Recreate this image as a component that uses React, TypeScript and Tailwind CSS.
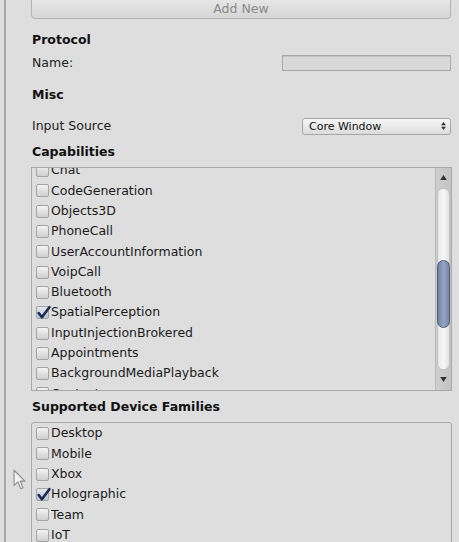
import React from 'react';

const capabilities: { label: string; checked?: boolean }[] = [
  { label: 'Chat' },
  { label: 'CodeGeneration' },
  { label: 'Objects3D' },
  { label: 'PhoneCall' },
  { label: 'UserAccountInformation' },
  { label: 'VoipCall' },
  { label: 'Bluetooth' },
  { label: 'SpatialPerception', checked: true },
  { label: 'InputInjectionBrokered' },
  { label: 'Appointments' },
  { label: 'BackgroundMediaPlayback' },
  { label: 'Contacts' },
];

const families: { label: string; checked?: boolean }[] = [
  { label: 'Desktop' },
  { label: 'Mobile' },
  { label: 'Xbox' },
  { label: 'Holographic', checked: true },
  { label: 'Team' },
  { label: 'IoT' },
];

function CheckBox({ checked }: { checked?: boolean }) {
  return (
    <div
      className={
        'relative w-[13px] h-[13px] shrink-0 rounded-[2px] border border-[#a3a3a3] ' +
        (checked
          ? 'bg-gradient-to-b from-[#e4e8f0] to-[#b9c2d3]'
          : 'bg-gradient-to-b from-[#f4f4f4] to-[#cfcfcf]')
      }
    >
      {checked && (
        <svg viewBox="0 0 14 14" className="absolute -left-[1px] -top-[2px] w-[15px] h-[15px]">
          <path d="M2.5 7.5 L5.5 11.5 L12.5 2" fill="none" stroke="#1c2b52" strokeWidth="2.4" strokeLinecap="round" strokeLinejoin="round" />
        </svg>
      )}
    </div>
  );
}

function CheckRow({ label, checked }: { label: string; checked?: boolean }) {
  return (
    <div className="flex items-center h-[20.3px] shrink-0 pl-[4px]">
      <CheckBox checked={checked} />
      <span className="ml-[2px] text-[12.5px] text-[#1a1a1a] leading-none">{label}</span>
    </div>
  );
}

function Header({ children }: { children: React.ReactNode }) {
  return (
    <div className="h-[20px] flex items-center pl-[1px] font-bold text-[12.5px] text-[#111]">{children}</div>
  );
}

export default function App() {
  return (
    <div
      className="relative w-[459px] h-[542px] overflow-hidden bg-[#dedede] pl-[4px]"
      style={{ fontFamily: '"DejaVu Sans", Verdana, sans-serif' }}
    >
      <div className="h-full border-l-2 border-[#a9a9a9] pl-[25px] pr-[7px] flex flex-col">
        {/* Add New button (top clipped) */}
        <div className="-mt-[1px] h-[20px] shrink-0 rounded-b-[4px] border border-[#b2b2b2] bg-gradient-to-b from-[#e6e6e6] to-[#d6d6d6] flex items-center justify-center mr-[1px]">
          <span className="text-[12.5px] text-[#8a8a8a] leading-none">Add New</span>
        </div>

        <div className="mt-[11px]">
          <Header>Protocol</Header>
        </div>
        <div className="mt-[4px] h-[20px] flex items-center justify-between pl-[1px]">
          <span className="text-[12.5px] text-[#222]">Name:</span>
          <div className="w-[169px] h-[16px] border border-[#a8a8a8] bg-[#d9d9d9] mr-[1px] shadow-[inset_0_1px_0_#c4c4c4]" />
        </div>

        <div className="mt-[13px]">
          <Header>Misc</Header>
        </div>
        <div className="mt-[11px] h-[20px] flex items-center justify-between pl-[1px]">
          <span className="text-[12.5px] text-[#222]">Input Source</span>
          <div className="w-[149px] h-[17px] rounded-[3px] border border-[#a6a6a6] bg-gradient-to-b from-[#f6f6f6] to-[#dcdcdc] mr-[1px] flex items-center justify-between pl-[6px] pr-[4px]">
            <span className="text-[11px] text-[#111] leading-none">Core Window</span>
            <svg viewBox="0 0 6 10" className="w-[5px] h-[8px]">
              <path d="M3 0 L6 4 H0 Z M3 10 L6 6 H0 Z" fill="#333" />
            </svg>
          </div>
        </div>

        <div className="mt-[7px]">
          <Header>Capabilities</Header>
        </div>
        <div className="mt-[4px] h-[224px] shrink-0 flex border border-[#a9a9a9] bg-[#dedede]">
          <div className="flex-1 overflow-hidden">
            <div className="-mt-[7px] flex flex-col">
              {capabilities.map((c) => (
                <CheckRow key={c.label} label={c.label} checked={c.checked} />
              ))}
            </div>
          </div>
          {/* Scrollbar */}
          <div className="w-[16px] shrink-0 bg-gradient-to-r from-[#cfcfcf] to-[#c3c3c3] border-l border-[#b9b9b9] flex flex-col items-center">
            <div className="h-[20px] flex items-center justify-center">
              <svg viewBox="0 0 8 6" className="w-[7px] h-[5px]">
                <path d="M4 0 L8 6 H0 Z" fill="#333" />
              </svg>
            </div>
            <div className="flex-1 w-[13px] rounded-[6px] bg-gradient-to-r from-[#e8e8e8] via-[#f7f7f7] to-[#e3e3e3] border border-[#c0c0c0] flex flex-col">
              <div className="h-[71px]" />
              <div className="h-[68px] -mx-[1px] rounded-[7px] border border-[#4e5c78] bg-gradient-to-r from-[#7282a3] via-[#95a4c2] to-[#7687a8]" />
            </div>
            <div className="h-[20px] flex items-center justify-center">
              <svg viewBox="0 0 8 6" className="w-[7px] h-[5px]">
                <path d="M4 6 L8 0 H0 Z" fill="#333" />
              </svg>
            </div>
          </div>
        </div>

        <div className="mt-[7px]">
          <Header>Supported Device Families</Header>
        </div>
        <div className="mt-[4px] flex-1 rounded-t-[3px] border border-[#a9a9a9] pt-[1px]">
          {families.map((f) => (
            <CheckRow key={f.label} label={f.label} checked={f.checked} />
          ))}
        </div>
      </div>

      {/* Mouse cursor overlay */}
      <svg viewBox="0 0 12 20" className="absolute left-[13px] top-[469px] w-[13px] h-[22px]">
        <path
          d="M1 1 L1 15 L4.5 11.8 L7.2 18 L9.2 17.1 L6.6 11 L11 11 Z"
          fill="#f4f4f4"
          stroke="#8c8c8c"
          strokeWidth="1"
          strokeLinejoin="round"
        />
      </svg>
    </div>
  );
}
